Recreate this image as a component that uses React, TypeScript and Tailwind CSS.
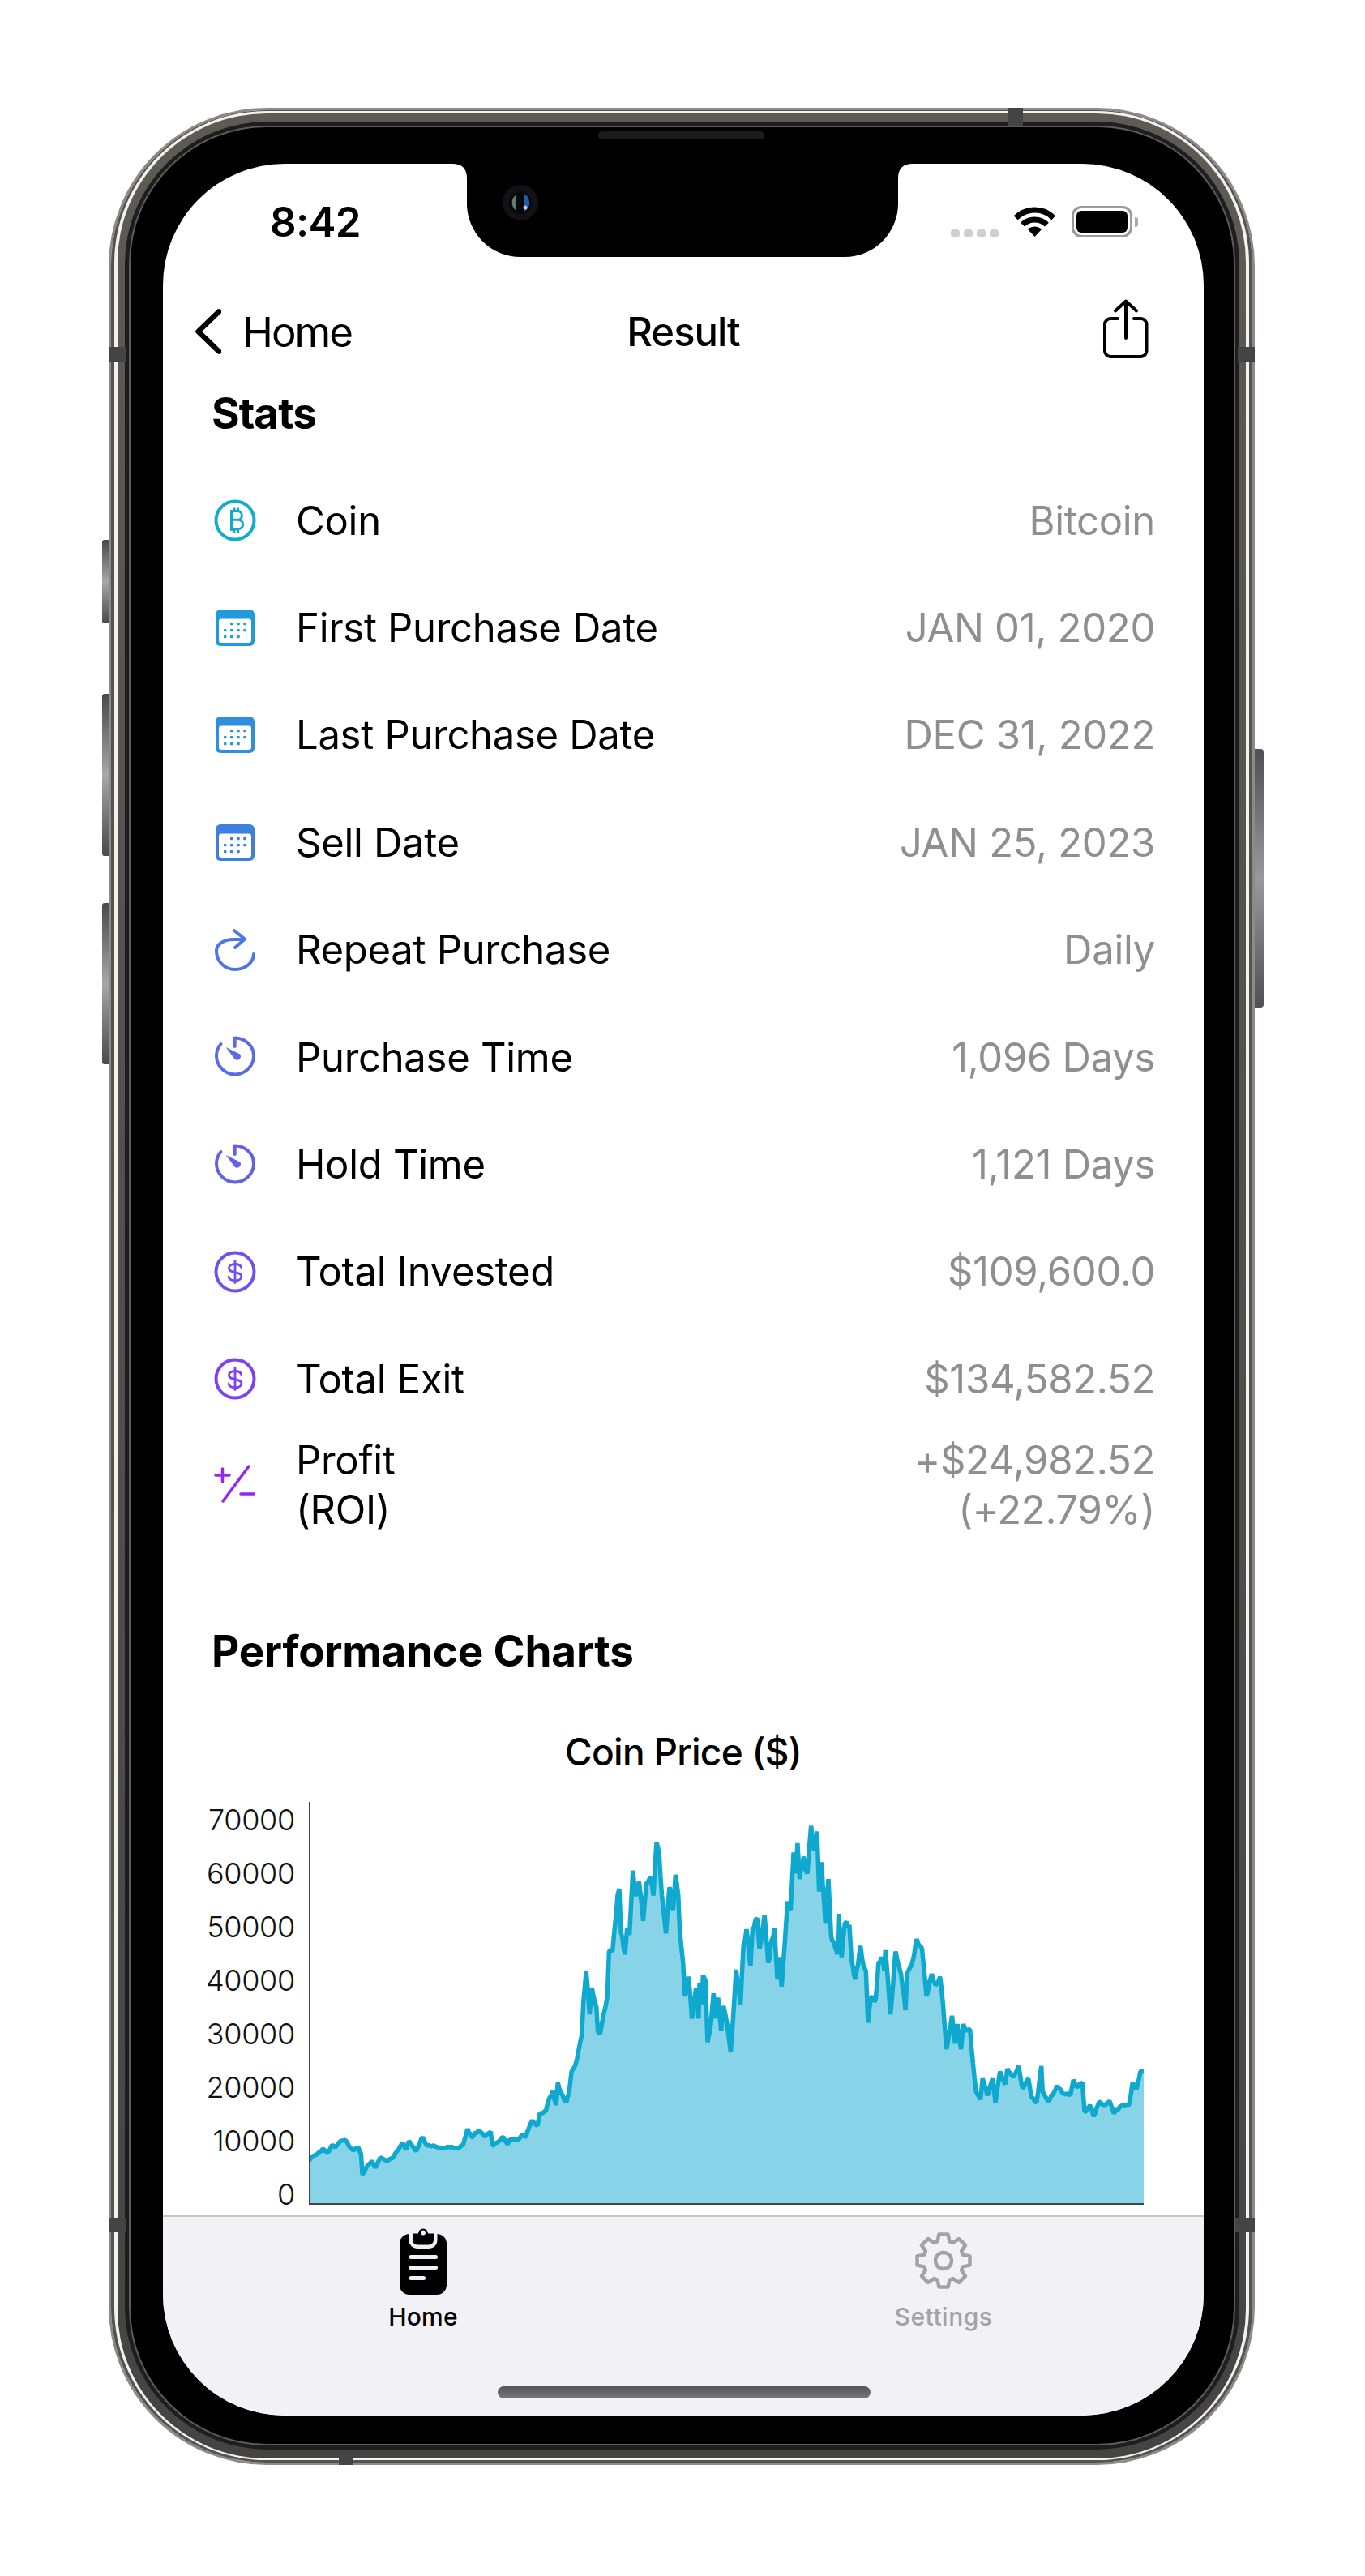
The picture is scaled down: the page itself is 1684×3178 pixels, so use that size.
import React from 'react';

type Row = { icon: React.ReactNode; label: React.ReactNode; value: React.ReactNode };

// price line read off the reference, in zoomed crop coordinates
const leftPts = [[336,1350],[345,1335],[360,1325],[375,1308],[392,1318],[403,1293],[412,1302],[425,1282],[442,1275],[452,1295],[465,1312],[480,1302],[488,1325],[492,1400],[505,1370],[520,1350],[530,1375],[545,1338],[565,1350],[580,1340],[597,1310],[610,1285],[620,1310],[628,1280],[650,1315],[668,1265],[680,1295],[700,1295],[725,1305],[750,1300],[775,1305],[788,1290],[800,1235],[812,1265],[835,1240],[850,1262],[868,1245],[873,1295],[885,1285],[905,1265],[918,1290],[925,1272],[945,1275],[960,1258],[972,1262],[980,1232],[990,1205],[1005,1225],[1012,1180],[1030,1170],[1040,1125],[1050,1100],[1060,1150],[1065,1070],[1075,1110],[1090,1140],[1098,1105],[1105,1030],[1115,1010],[1125,960],[1135,900],[1140,780],[1148,670],[1158,825],[1165,730],[1178,800],[1182,885],[1190,890],[1200,820],[1210,760],[1215,600],[1225,600],[1232,510],[1240,400],[1245,375],[1250,530],[1262,610],[1268,515],[1275,540],[1285,310],[1292,400],[1303,350],[1315,490],[1325,355],[1338,335],[1345,400],[1354,210],[1362,250],[1370,400],[1382,535],[1392,370],[1403,450],[1410,325],[1418,400],[1422,520],[1432,640],[1437,760],[1448,690],[1458,840],[1470,730]];
const rightPts = [[5,840],[8,715],[15,790],[20,685],[28,705],[35,925],[45,870],[55,750],[62,840],[70,765],[80,885],[88,795],[100,860],[112,960],[120,840],[130,665],[145,790],[155,575],[165,520],[178,650],[185,520],[200,480],[208,590],[225,470],[237,640],[258,515],[268,700],[272,620],[282,725],[295,530],[302,420],[312,450],[322,245],[330,320],[335,212],[342,340],[355,260],[368,320],[380,150],[390,240],[400,170],[407,385],[415,280],[428,500],[438,340],[447,545],[468,610],[472,465],[482,620],[493,500],[508,505],[515,630],[528,700],[545,580],[555,650],[563,670],[570,855],[580,765],[595,775],[605,640],[615,620],[625,670],[628,595],[645,825],[662,600],[672,650],[680,680],[695,810],[700,680],[715,650],[733,555],[750,590],[765,760],[783,680],[795,720],[810,690],[820,790],[832,950],[850,830],[860,930],[868,860],[880,950],[888,860],[895,880],[910,880],[920,1000],[930,1100],[945,1130],[952,1055],[968,1115],[985,1055],[995,1140],[1010,1030],[1028,1075],[1035,1020],[1055,1050],[1072,1010],[1085,1090],[1105,1055],[1115,1120],[1132,1140],[1148,1010],[1152,1100],[1172,1140],[1200,1080],[1225,1110],[1245,1115],[1255,1060],[1265,1085],[1285,1070],[1292,1175],[1310,1150],[1322,1190],[1340,1140],[1360,1155],[1375,1135],[1390,1180],[1410,1155],[1440,1150],[1452,1070],[1465,1095],[1478,1030],[1490,1035]];

const chartPts = [
  ...leftPts.map(([x, y]) => [x / 2.376 + 240 - 381, y / 2.904 - 22]),
  ...rightPts.map(([x, y]) => [x / 2.703 + 860 - 381, y / 2.904 - 22]),
];

// fill in the day to day wiggle between the read-off points
const noisy: number[][] = [];
chartPts.forEach((p, i) => {
  const next = chartPts[i + 1];
  noisy.push(p);
  if (!next) return;
  const steps = Math.floor((next[0] - p[0]) / 1.5);
  for (let s = 1; s < steps; s++) {
    const t = s / steps;
    const y = p[1] + (next[1] - p[1]) * t;
    const r = Math.sin((noisy.length + 1) * 12.9898) * 43758.5453;
    const n = (r - Math.floor(r) - 0.5) * (495 - y) * 0.025;
    noisy.push([p[0] + (next[0] - p[0]) * t, y + n]);
  }
});
const linePath = noisy.map(([x, y], i) => `${i ? 'L' : 'M'}${x.toFixed(1)} ${y.toFixed(1)}`).join(' ');

const Ring = ({ color, children }: { color: string; children: React.ReactNode }) => (
  <svg className="shrink-0" width="52" height="52" viewBox="0 0 52 52" fill="none" stroke={color} strokeWidth="4" strokeLinecap="round">
    <circle cx="26" cy="26" r="23.5" />
    {children}
  </svg>
);

const BitcoinIcon = () => (
  <Ring color="#10acd0">
    <g strokeWidth="3" strokeLinecap="butt">
      <path d="M21.5 14.5h7.5a5.4 5.4 0 0 1 0 10.8h-7.5 M21.5 25.3h8.5a5.7 5.7 0 0 1 0 11.4h-8.5 M21.5 13v26" />
      <path d="M25 10.500v4 M29.500 10.500v4 M25 37v4.500 M29.500 37v4.500" />
    </g>
  </Ring>
);

const DollarIcon = ({ color }: { color: string }) => (
  <Ring color={color}>
    <g strokeWidth="2.800">
      <path d="M33.500 20.500c-.6-2.500-3.600-4-7.500-4-4.300 0-7.500 2-7.500 5.100 0 7.200 15.400 3.200 15.400 10.200 0 3.200-3.400 5-7.900 5-4.300 0-7.300-1.800-7.900-4.600" />
      <path d="M26 12.500v27" />
    </g>
  </Ring>
);

const CalendarIcon = ({ color }: { color: string }) => {
  const dots = [[19.700,17.600],[28,17.600],[36,17.600],[11.700,25.600],[19.700,25.600],[28,25.600],[36,25.600],[11.700,33.600],[19.700,33.600],[28,33.600]];
  return (
    <svg className="shrink-0" width="48" height="45" viewBox="0 0 48 45">
      <rect width="48" height="45" rx="6" fill={color} />
      <rect x="4" y="11.500" width="40" height="29.500" rx="3" fill="#fff" />
      {dots.map(([x, y]) => (
        <rect key={`${x}-${y}`} x={x - 1.800} y={y - 1.600} width="3.600" height="3.200" rx="1" fill={color} />
      ))}
    </svg>
  );
};

const RepeatIcon = () => (
  <svg className="shrink-0" width="64" height="64" viewBox="0 0 64 64" fill="none" stroke="#4d77e6" strokeWidth="4" strokeLinecap="round" strokeLinejoin="round">
    <path d="M55 37c0 10-10 19-23 19S9 46 9 33c0-8 9-14 21-14h13" />
    <path d="M31 8l13 10.500L32 29" />
  </svg>
);

const TimerIcon = ({ color }: { color: string }) => (
  <svg className="shrink-0" width="64" height="64" viewBox="0 0 64 64" fill="none">
    <path d="M31.700 19V8.500C44 8.500 55 18 55 30.500S44.500 53.500 32 53.500 9 43 9 30.500c0-5.500 2-10.500 5.500-14.500" stroke={color} strokeWidth="4" strokeLinecap="round" strokeLinejoin="round" />
    <path d="M20.500 20l17.500 8.500a4.500 4.500 0 0 1-6 6.500z" fill={color} />
  </svg>
);

const ProfitIcon = () => (
  <svg className="shrink-0" width="52" height="52" viewBox="0 0 52 52" fill="none" stroke="#9326f5" strokeWidth="3.500" strokeLinecap="round">
    <path d="M2 14h17 M10.500 6v16" />
    <path d="M43 3L11 46" />
    <path d="M33 37h16" />
  </svg>
);

const ShareIcon = () => (
  <svg width="58" height="76" viewBox="0 0 58 76" fill="none" stroke="#000" strokeWidth="4" strokeLinecap="round" strokeLinejoin="round">
    <path d="M19 25h-9a7 7 0 0 0-7 7v33a7 7 0 0 0 7 7h37.500a7 7 0 0 0 7-7V32a7 7 0 0 0-7-7H39" />
    <path d="M29 49V4 M16 15.500L29 3.500 42 15.500" />
  </svg>
);

const WifiIcon = () => (
  <svg width="51" height="37" viewBox="0 0 51 37" fill="none" stroke="#000" strokeWidth="7">
    <path d="M2.200 13.700a33 33 0 0 1 46.600 0" />
    <path d="M10.600 22.100a21 21 0 0 1 29.800 0" />
    <path d="M25.500 37L17 28a12 12 0 0 1 17 0z" fill="#000" stroke="none" />
  </svg>
);

const ClipboardIcon = () => (
  <svg width="58" height="84" viewBox="0 0 58 84">
    <rect y="9" width="58" height="75" rx="12" fill="#000" />
    <path d="M11.500 9h35v8a10 10 0 0 1-10 10h-15a10 10 0 0 1-10-10z" fill="#f1f1f6" />
    <path d="M16 8.500h7a6 6 0 0 1 12 0h7v8a6 6 0 0 1-6 6H22a6 6 0 0 1-6-6z" fill="#000" />
    <circle cx="29" cy="7.500" r="3" fill="#f1f1f6" />
    <g fill="#f1f1f6">
      <rect x="11.500" y="35" width="35.500" height="5" rx="2.500" />
      <rect x="11.500" y="48" width="35.500" height="5" rx="2.500" />
      <rect x="11.500" y="61" width="20.500" height="5" rx="2.500" />
    </g>
  </svg>
);

// 8 tooth gear outline
const gearPath = (() => {
  const pts: string[] = [];
  for (let i = 0; i < 8; i++) {
    const a = (i * Math.PI) / 4 - Math.PI / 2;
    const at = (r: number, d: number) => `${(37 + r * Math.cos(a + d)).toFixed(2)} ${(37 + r * Math.sin(a + d)).toFixed(2)}`;
    pts.push(`${i ? 'L' : 'M'}${at(25, -0.3)} L${at(33, -0.17)} L${at(33, 0.17)} L${at(25, 0.3)}`);
  }
  return pts.join(' ') + ' Z';
})();

const GearIcon = () => (
  <svg width="74" height="74" viewBox="0 0 74 74" fill="none" stroke="#a3a3a3" strokeWidth="4.500" strokeLinejoin="round">
    <path d={gearPath} />
    <circle cx="37" cy="37" r="10" />
  </svg>
);

const rows: Row[] = [
  { icon: <BitcoinIcon />, label: 'Coin', value: 'Bitcoin' },
  { icon: <CalendarIcon color="#1e9bd8" />, label: 'First Purchase Date', value: 'JAN 01, 2020' },
  { icon: <CalendarIcon color="#2f8ee0" />, label: 'Last Purchase Date', value: 'DEC 31, 2022' },
  { icon: <CalendarIcon color="#3d7fe0" />, label: 'Sell Date', value: 'JAN 25, 2023' },
  { icon: <RepeatIcon />, label: 'Repeat Purchase', value: 'Daily' },
  { icon: <TimerIcon color="#5a6ae8" />, label: 'Purchase Time', value: '1,096 Days' },
  { icon: <TimerIcon color="#6560ea" />, label: 'Hold Time', value: '1,121 Days' },
  { icon: <DollarIcon color="#7050ee" />, label: 'Total Invested', value: '$109,600.0' },
  { icon: <DollarIcon color="#7f3ff2" />, label: 'Total Exit', value: '$134,582.52' },
  {
    icon: <ProfitIcon />,
    label: <>Profit<br />(ROI)</>,
    value: <>+$24,982.52<br />(+22.79%)</>,
  },
];

const yLabels = ['70000', '60000', '50000', '40000', '30000', '20000', '10000', '0'];

const App: React.FC = () => {
  return (
    <div className="w-[1684px] h-[3178px] bg-white pl-[134px] pt-[133px] font-[Inter,sans-serif] overflow-hidden">
      {/* Phone frame */}
      <div className="relative w-[1414px] h-[2908px]">
        {/* side buttons */}
        <div className="absolute left-[-8px] top-[533px] w-[8px] h-[103px] rounded-l-[3px] bg-linear-to-b from-[#4a4a4a] via-[#a8a8a8] to-[#4a4a4a]" />
        <div className="absolute left-[-8px] top-[723px] w-[8px] h-[200px] rounded-l-[3px] bg-linear-to-b from-[#4a4a4a] via-[#a8a8a8] to-[#4a4a4a]" />
        <div className="absolute left-[-8px] top-[981px] w-[8px] h-[199px] rounded-l-[3px] bg-linear-to-b from-[#4a4a4a] via-[#a8a8a8] to-[#4a4a4a]" />
        <div className="absolute right-[-11px] top-[791px] w-[11px] h-[319px] rounded-r-[4px] bg-linear-to-b from-[#505050] via-[#9a9a9a] to-[#505050]" />

        <div className="w-full h-full rounded-[195px] border-[3px] border-[#8b8b88]">
          <div className="w-full h-full rounded-[192px] bg-[#55534f] pt-px pb-[3px] px-[4px]">
            <div className="w-full h-full rounded-[188px] bg-[#f4f2ec] pt-[3px] pb-[2px] px-[4px]">
              <div className="w-full h-full rounded-[184px] bg-linear-to-b from-[#5e5b55] to-[#444444] pt-[10px] pb-[11px] pl-[9px] pr-[8px]">
                <div className="w-full h-full rounded-[176px] bg-[#1e1e1e] p-[5px]">
                  <div className="w-full h-full rounded-[170px] bg-[#5c5c5c] p-[2px]">
                    <div className="w-full h-full rounded-[168px] bg-black pl-[40px] pr-[37px] pt-[45px] pb-[35px]">
                      {/* Screen */}
                      <div className="relative w-[1284px] h-[2778px] rounded-[150px] overflow-hidden bg-white flex flex-col text-black">
                        {/* Status bar */}
                        <div className="h-[141px] shrink-0 flex items-start justify-between pt-[44px] pl-[132px] pr-[81px]">
                          <span className="text-[51px] leading-[56px] font-semibold tracking-[-0.7px]">8:42</span>
                          <div className="flex items-center mt-[8px]">
                            <div className="flex gap-[5px] mt-[28px] mr-[19px]">
                              <span className="w-[11px] h-[10px] rounded-[4px] bg-[#cfcfcf]" />
                              <span className="w-[11px] h-[10px] rounded-[4px] bg-[#cfcfcf]" />
                              <span className="w-[11px] h-[10px] rounded-[4px] bg-[#cfcfcf]" />
                              <span className="w-[11px] h-[10px] rounded-[4px] bg-[#cfcfcf]" />
                            </div>
                            <WifiIcon />
                            <div className="ml-[20px] w-[75px] h-[39px] rounded-[12px] border-[3px] border-[#9a9a9a] p-[3px]">
                              <div className="w-full h-full rounded-[6px] bg-black" />
                            </div>
                            <div className="ml-[3px] w-[4px] h-[12px] rounded-r-[3px] bg-[#aaaaaa]" />
                          </div>
                        </div>

                        {/* Nav bar */}
                        <div className="h-[132px] shrink-0 flex items-center justify-between pl-[40px] pr-[67px]">
                          <div className="flex items-center w-[300px]">
                            <svg width="32" height="56" viewBox="0 0 32 56" fill="none" stroke="#000" strokeWidth="6.500" strokeLinecap="round" strokeLinejoin="round">
                              <path d="M29 3.500L3.500 28 29 52.500" />
                            </svg>
                            <span className="ml-[26px] text-[51px] leading-none tracking-[-2px]">Home</span>
                          </div>
                          <span className="text-[49px] leading-none font-medium tracking-[-1px]">Result</span>
                          <div className="w-[273px] flex justify-end">
                            <div className="-mt-[6px]"><ShareIcon /></div>
                          </div>
                        </div>

                        {/* Scrolling content */}
                        <div className="flex-1 min-h-0 overflow-hidden px-[60px]">
                          <h2 className="h-[72px] mb-[29px] flex items-center text-[53px] font-bold tracking-[-1px]">Stats</h2>
                          {rows.map((r, i) => (
                            <div key={i} className={`h-[132.4px] flex items-center justify-between ${i === 9 ? 'pb-[4px]' : ''}`}>
                              <div className="flex items-center">
                                <div className="w-[58px] flex justify-center">{r.icon}</div>
                                <div className="ml-[46px] text-[49px] leading-[61px] tracking-[-0.3px]">{r.label}</div>
                              </div>
                              <div className="text-[49px] leading-[61px] tracking-[-0.3px] text-right text-[#8e8e93]">{r.value}</div>
                            </div>
                          ))}

                          <h2 className="h-[72px] mt-[102px] flex items-center text-[53px] font-bold tracking-[-0.2px]">Performance Charts</h2>
                          <div className="mt-[58px] h-[60px] flex items-center justify-center text-[46px] font-medium tracking-[-0.7px]">Coin Price ($)</div>

                          {/* Chart */}
                          <div className="mt-[31px] flex items-start">
                            <div className="w-[103px] -mt-[11px] shrink-0">
                              {yLabels.map((l) => (
                                <div key={l} className="h-[66px] flex items-center justify-end text-[36px] font-light tracking-[-0.3px] text-[#111]">{l}</div>
                              ))}
                            </div>
                            <svg className="ml-[17px] shrink-0" width="1030" height="497" viewBox="0 0 1030 497">
                              <path d={`${linePath} L1030 495 L0 495 Z`} fill="#87d3e8" />
                              <path d={linePath} fill="none" stroke="#0fa9d0" strokeWidth="5.500" strokeLinejoin="bevel" />
                              <path d="M0.800 0V496 H1030" fill="none" stroke="#444" strokeWidth="2" />
                            </svg>
                          </div>
                        </div>

                        {/* Tab bar */}
                        <div className="relative h-[247px] shrink-0 bg-[#f1f1f6] border-t-2 border-[#c6c6c9] flex">
                          <div className="flex-1 flex flex-col items-center pt-[9px]">
                            <div className="h-[90px] flex items-center justify-center"><ClipboardIcon /></div>
                            <span className="mt-[6px] text-[30px] leading-[36px] font-medium tracking-[0.2px]">Home</span>
                          </div>
                          <div className="flex-1 flex flex-col items-center pt-[9px]">
                            <div className="h-[90px] flex items-center justify-center"><GearIcon /></div>
                            <span className="mt-[6px] text-[30px] leading-[36px] font-medium tracking-[0.5px] text-[#a3a3a3]">Settings</span>
                          </div>
                          {/* home indicator */}
                          <div className="absolute left-[413px] bottom-[21px] w-[460px] h-[15px] rounded-full bg-linear-to-b from-[#56565a] to-[#77777c]" />
                        </div>

                        {/* Notch */}
                        <svg className="absolute left-[357px] top-0" width="568" height="115" viewBox="0 0 568 115">
                          <path d="M0 0Q18 0 18 18V49A66 66 0 0 0 84 115H484A66 66 0 0 0 550 49V18Q550 0 568 0Z" fill="#000" />
                          <circle cx="84" cy="48" r="22" fill="#121216" />
                          <circle cx="84" cy="48" r="14" fill="#06080c" />
                          <path d="M88 37a12 12 0 0 1 0 22z" fill="#1d5fa8" />
                          <path d="M79 38a12 12 0 0 0 0 20z" fill="#5d7d70" />
                          <circle cx="90" cy="54" r="2.500" fill="#c8c8e0" />
                        </svg>
                      </div>
                    </div>
                  </div>
                </div>
              </div>
            </div>
          </div>
        </div>

        {/* speaker */}
        <div className="absolute left-[604px] top-[29px] w-[205px] h-[10px] rounded-full bg-[#1c1c1c]" />

        {/* antenna bands */}
        <div className="absolute left-[1110px] top-0 w-[18px] h-[23px] bg-[#444]" />
        <div className="absolute left-0 top-[295px] w-[21px] h-[18px] bg-[#444]" />
        <div className="absolute right-0 top-[295px] w-[21px] h-[18px] bg-[#444]" />
        <div className="absolute left-0 top-[2603px] w-[22px] h-[18px] bg-[#444]" />
        <div className="absolute right-0 top-[2603px] w-[24px] h-[18px] bg-[#444]" />
        <div className="absolute left-[284px] bottom-0 w-[18px] h-[19px] bg-[#444]" />
      </div>
    </div>
  );
};

export default App;
